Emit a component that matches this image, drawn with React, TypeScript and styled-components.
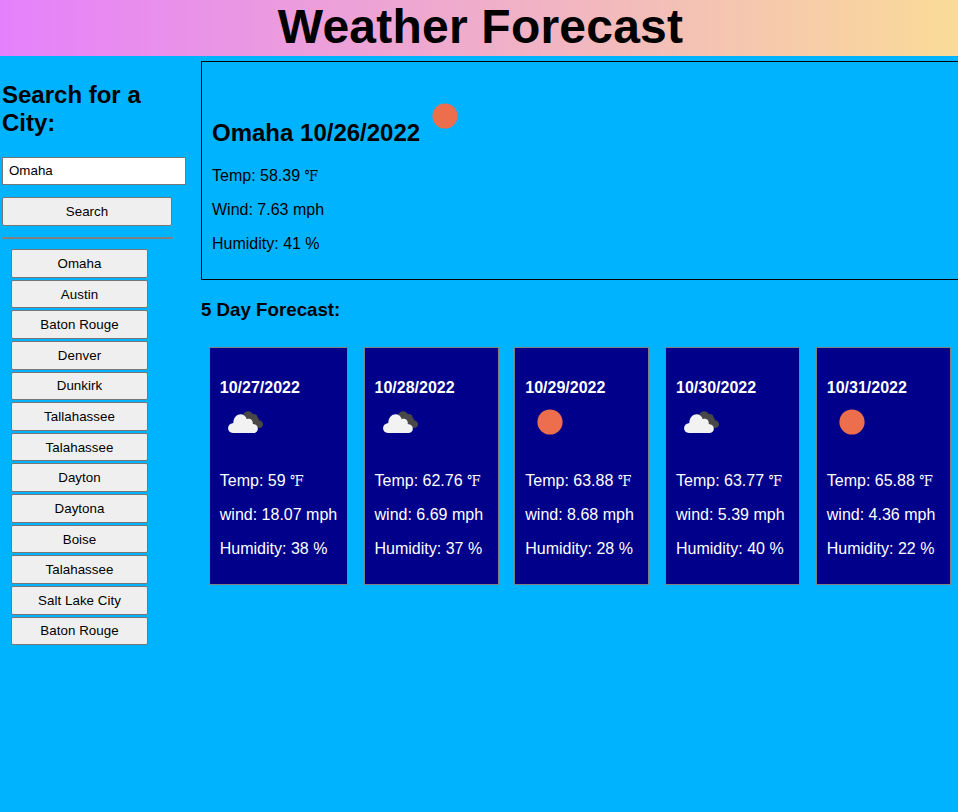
import React from "react";
import styled, { createGlobalStyle } from "styled-components";

const GlobalStyle = createGlobalStyle`
  * { box-sizing: border-box; }
  body {
    margin: 0;
    background: #00b3ff;
    color: #000;
    font-family: "Liberation Sans", Arial, sans-serif;
    font-size: 16px;
    overflow: hidden;
  }
`;

const Header = styled.header`
  height: 56px;
  background: linear-gradient(to right, #e580fc, #fadb98);
`;

const Title = styled.h1`
  margin: 0;
  padding-left: 3px;
  font-size: 48px;
  line-height: 54px;
  text-align: center;
  letter-spacing: 0.22px;
`;

const Layout = styled.div`
  display: flex;
`;

const Sidebar = styled.aside`
  flex: 0 0 201px;
  padding: 25px 0 0 2px;
`;

const SearchHeading = styled.h2`
  width: 170px;
  margin: 0 0 20px;
  font-size: 24px;
  line-height: 28px;
`;

const SearchInput = styled.input`
  display: block;
  width: 184px;
  height: 28px;
  margin-bottom: 12px;
  padding: 0 6px 1px;
  border: 1px solid #767676;
  border-radius: 0;
  background: #fff;
  color: #000;
  font: 13.333px "Liberation Sans", Arial, sans-serif;
  outline: none;
`;

const Button = styled.button`
  display: block;
  width: 100%;
  height: 28.6px;
  padding: 0;
  border: 1px solid #767676;
  border-radius: 2px;
  background: #efefef;
  color: #000;
  font: 13.333px "Liberation Sans", Arial, sans-serif;
  letter-spacing: 0.05px;
`;

const SearchForm = styled.form`
  width: 170px;
`;

const Divider = styled.hr`
  width: 171px;
  height: 2px;
  margin: 11.6px 0 9.9px;
  border: 0;
  background: #808080;
`;

const History = styled.nav`
  display: grid;
  gap: 2.04px;
  width: 137px;
  margin-left: 9px;
`;

const Content = styled.main`
  flex: 1;
  min-width: 0;
  padding-top: 5px;
`;

const Current = styled.section`
  height: 219px;
  padding: 29px 10px 0;
  border: 1px solid #000;
  border-right: 0;
`;

const CurrentTitle = styled.h2`
  display: flex;
  height: 68px;
  margin: 0;
  font-size: 24px;
  line-height: 28px;
`;

const CurrentName = styled.span`
  margin: 28px 0 0;
`;

const Reading = styled.p`
  height: 18px;
  margin: 0 0 16px;
  line-height: 18px;
  white-space: nowrap;
`;

const CurrentReadings = styled.div`
  padding-top: 8px;
`;

const ForecastHeading = styled.h3`
  margin: 19px 0 26px;
  font-size: 18.72px;
  line-height: 22px;
`;

const Cards = styled.div`
  display: flex;
  gap: 15.75px;
  padding-left: 7.9px;
`;

const Card = styled.article<{ $wide?: boolean }>`
  flex: 0 0 ${(p) => (p.$wide ? 139 : 135)}px;
  height: 238px;
  padding: 31px 0 0 9.9px;
  border: 1px solid #808080;
  background: #00008b;
  color: #fff;
`;

const CardDate = styled.h4`
  margin: 0;
  font-size: 16px;
  line-height: 18px;
`;

const WeatherIcon = styled.svg`
  display: block;
  width: 50px;
  height: 50px;
`;

const CardReadings = styled.div`
  padding-top: 25px;
`;

type Condition = "sun" | "clouds";

function Weather({ kind }: { kind: Condition }) {
  return (
    <WeatherIcon viewBox="0 0 50 50" aria-hidden="true">
      {kind === "sun" ? (
        <circle cx="25" cy="25" r="12.6" fill="#ec6e4c" />
      ) : (
        <>
          <path
            d="M23 18C24.5 13.5 30.5 12.8 33 17.2C35.5 16.6 37.7 18.3 37.8 21C39.3 21.6 38.7 22.6 39 23.2C44.4 24.2 44.2 30.6 39.5 30.9C37.5 31 36.4 30 35.8 28.5L26 23Z"
            fill="#484848"
          />
          <path
            d="M13 36C6.4 35.6 6.3 26.8 13.3 26C13.4 16.2 24.3 14.4 26.8 22.2C30.5 20.9 33.2 23.5 32.8 27C39.4 27 39.4 36 33.8 36Z"
            fill="#f2f2f2"
          />
        </>
      )}
    </WeatherIcon>
  );
}

const cities = [
  "Omaha", "Austin", "Baton Rouge", "Denver", "Dunkirk", "Tallahassee", "Talahassee",
  "Dayton", "Daytona", "Boise", "Talahassee", "Salt Lake City", "Baton Rouge",
];

const days: { date: string; kind: Condition; temp: string; wind: string; humidity: string }[] = [
  { date: "10/27/2022", kind: "clouds", temp: "59", wind: "18.07", humidity: "38" },
  { date: "10/28/2022", kind: "clouds", temp: "62.76", wind: "6.69", humidity: "37" },
  { date: "10/29/2022", kind: "sun", temp: "63.88", wind: "8.68", humidity: "28" },
  { date: "10/30/2022", kind: "clouds", temp: "63.77", wind: "5.39", humidity: "40" },
  { date: "10/31/2022", kind: "sun", temp: "65.88", wind: "4.36", humidity: "22" },
];

const Degree = styled.span`
  display: inline-block;
  font-family: "DejaVu Serif", serif;
  font-size: 13px;
  line-height: 14px;
  transform: scaleY(1.18);
  transform-origin: 0 80%;
`;

export default function App() {
  return (
    <>
      <GlobalStyle />
      <Header>
        <Title>Weather Forecast</Title>
      </Header>
      <Layout>
        <Sidebar>
          <SearchHeading>Search for a City:</SearchHeading>
          <SearchForm onSubmit={(e) => e.preventDefault()}>
            <SearchInput defaultValue="Omaha" aria-label="City" />
            <Button type="submit">Search</Button>
          </SearchForm>
          <Divider />
          <History>
            {cities.map((city, i) => (
              <Button key={i} type="button">{city}</Button>
            ))}
          </History>
        </Sidebar>
        <Content>
          <Current>
            <CurrentTitle>
              <CurrentName>Omaha 10/26/2022</CurrentName>
              <Weather kind="sun" />
            </CurrentTitle>
            <CurrentReadings>
              <Reading>Temp: 58.39 <Degree>℉</Degree></Reading>
              <Reading>Wind: 7.63 mph</Reading>
              <Reading>Humidity: 41 %</Reading>
            </CurrentReadings>
          </Current>
          <ForecastHeading>5 Day Forecast:</ForecastHeading>
          <Cards>
            {days.map((day) => (
              <Card key={day.date} $wide={day.wind.length > 4}>
                <CardDate>{day.date}</CardDate>
                <Weather kind={day.kind} />
                <CardReadings>
                  <Reading>Temp: {day.temp} <Degree>℉</Degree></Reading>
                  <Reading>wind: {day.wind} mph</Reading>
                  <Reading>Humidity: {day.humidity} %</Reading>
                </CardReadings>
              </Card>
            ))}
          </Cards>
        </Content>
      </Layout>
    </>
  );
}
